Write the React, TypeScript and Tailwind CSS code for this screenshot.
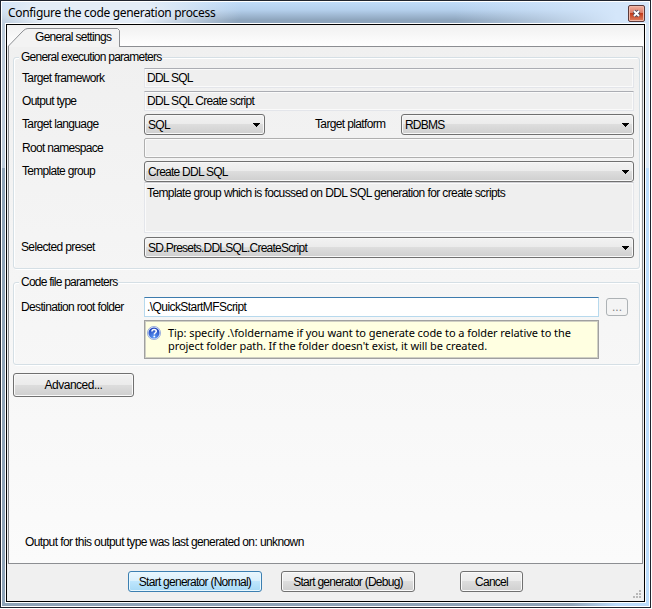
import type { ReactNode } from 'react';
import clsx from 'clsx';

interface FieldProps {
  children?: ReactNode;
  className?: string;
}

const etched = 'border border-[#d5dfe5] rounded-[3px] shadow-[inset_1px_1px_0_#fff,1px_1px_0_#fff]';

function Label({ children, className }: FieldProps) {
  return <div className={clsx('w-[122px] shrink-0', className)}>{children}</div>;
}

function ReadOnlyField({ children, className }: FieldProps) {
  return (
    <div
      className={clsx(
        'flex-1 border border-[#e3e5ea] bg-[#efefef] pl-[2px] shadow-[inset_0_0_0_1px_#fafafa]',
        className,
      )}
    >
      {children}
    </div>
  );
}

function Combo({ children, className }: FieldProps) {
  return (
    <div
      className={clsx(
        'flex h-[21px] items-center justify-between rounded-[3px] border border-[#707070] pl-[3px] pr-1',
        'bg-[linear-gradient(#f2f2f2,#ebebeb_48%,#dddddd_50%,#cfcfcf)] shadow-[inset_0_0_0_1px_#f8f8f8]',
        className,
      )}
    >
      <span className="mt-[2px] leading-[17px]">{children}</span>
      <svg width="7" height="4" viewBox="0 0 7 4" shapeRendering="crispEdges">
        <path d="M0 0H7V1H6V2H5V3H4V4H3V3H2V2H1V1H0Z" fill="#000" />
      </svg>
    </div>
  );
}

function Button({ children, className, primary }: FieldProps & { primary?: boolean }) {
  return (
    <button
      type="button"
      className={clsx(
        'flex items-center justify-center rounded-[3px] border',
        primary
          ? 'border-[#3c7fb1] bg-[linear-gradient(#eaf6fd,#d9f0fc_48%,#bee6fd_50%,#a7d9f5)] shadow-[inset_0_0_0_1px_#e8f8ff]'
          : 'border-[#707070] bg-[linear-gradient(#f2f2f2,#ebebeb_48%,#dddddd_50%,#cfcfcf)] shadow-[inset_0_0_0_1px_#fafafa]',
        className,
      )}
    >
      {children}
    </button>
  );
}

function HelpIcon() {
  return (
    <svg width="14" height="14" viewBox="0 0 14 14" className="mt-1 shrink-0">
      <defs>
        <radialGradient id="help" cx="0.5" cy="0.9" r="0.8">
          <stop offset="0" stopColor="#5f9cf8" />
          <stop offset="1" stopColor="#2348bf" />
        </radialGradient>
      </defs>
      <circle cx="7" cy="7" r="6.6" fill="#dfe6f7" stroke="#8fa4d8" strokeWidth="0.8" />
      <circle cx="7" cy="7" r="5.5" fill="url(#help)" />
      <path
        d="M4.9 5.6C4.9 4.2 5.8 3.4 7.1 3.4S9.3 4.2 9.3 5.3C9.3 6.7 7.3 6.8 7.3 8.4"
        fill="none"
        stroke="#fff"
        strokeWidth="1.5"
      />
      <circle cx="7.3" cy="10.4" r="0.95" fill="#fff" />
    </svg>
  );
}

function TitleBar() {
  return (
    <div className="flex h-[21px] justify-between pl-[3px] pr-px">
      <span className="font-['Noto_Sans',sans-serif] text-[12px] leading-[22px] tracking-[-0.32px]">
        Configure the code generation process
      </span>
      <div className="mt-[3px] flex h-[17px] w-[17px] items-center justify-center rounded-[2px] border border-[#5a3a3c] bg-[linear-gradient(#f0b0a0,#dc7b66_48%,#c23c1c_50%,#e08060)] shadow-[inset_0_0_0_1px_#f0b8a8]">
        <svg width="9" height="9" viewBox="0 0 9 9">
          <path d="M2 2L7 7M7 2L2 7" stroke="#4a4a5c" strokeWidth="3.6" />
          <path d="M2 2L7 7M7 2L2 7" stroke="#fff" strokeWidth="1.9" />
        </svg>
      </div>
    </div>
  );
}

function TabStrip() {
  return (
    <div className="flex h-[21px] items-end bg-[linear-gradient(#f0f0f0,#fff)] pl-px">
      <div className="relative z-10 -mb-px h-[19px] w-[112px]">
        <svg width="112" height="19" viewBox="0 0 112 19" className="absolute inset-0">
          <path
            d="M0.5 19V18L14 4C17 1 18 0.5 21 0.5H109.5L111.5 2.5V19"
            fill="#f3f3f3"
            stroke="#8c8e92"
          />
        </svg>
        <span className="absolute left-[27px] top-[2px] whitespace-nowrap leading-[15px] tracking-[-0.7px]">
          General settings
        </span>
      </div>
    </div>
  );
}

function ExecutionParameters() {
  return (
    <fieldset className={clsx('h-[218px]', etched)}>
      <legend className="ml-[5px] bg-[#f0f0f0] pl-[2px] pr-px leading-[13px] tracking-[-0.75px]">
        General execution parameters
      </legend>
      <div className="flex flex-col gap-[3px] pl-2 pr-[5px] pt-1 leading-[20px]">
        <div className="flex h-5">
          <Label>Target framework</Label>
          <ReadOnlyField className="border-t-[#abadb3] leading-[18px] tracking-[-0.75px]">DDL SQL</ReadOnlyField>
        </div>
        <div className="flex h-5">
          <Label className="tracking-[-0.7px]">Output type</Label>
          <ReadOnlyField className="border-t-[#abadb3] leading-[18px] tracking-[-0.7px]">
            DDL SQL Create script
          </ReadOnlyField>
        </div>
        <div className="flex h-[21px]">
          <Label>Target language</Label>
          <Combo className="w-[121px]">SQL</Combo>
          <span className="ml-[50px] w-[86px]">Target platform</span>
          <Combo className="flex-1 tracking-[-0.8px]">RDBMS</Combo>
        </div>
        <div className="flex h-5">
          <Label className="tracking-[-0.7px]">Root namespace</Label>
          <div className="flex-1 rounded-[2px] border border-[#afafaf] bg-[#efefef] shadow-[inset_0_0_0_1px_#fafafa]" />
        </div>
        <div className="flex h-[72px]">
          <Label className="tracking-[-0.7px]">Template group</Label>
          <div className="flex flex-1 flex-col">
            <Combo className="tracking-[-0.75px]">Create DDL SQL</Combo>
            <ReadOnlyField className="border-t-[#d0d0d4] leading-5 tracking-[-0.61px]">
              Template group which is focussed on DDL SQL generation for create scripts
            </ReadOnlyField>
          </div>
        </div>
        <div className="mt-px flex h-[21px]">
          <Label className="-ml-px mr-px">Selected preset</Label>
          <Combo className="flex-1 tracking-[-0.77px]">SD.Presets.DDLSQL.CreateScript</Combo>
        </div>
      </div>
    </fieldset>
  );
}

function CodeFileParameters() {
  return (
    <fieldset className={clsx('mt-[7px] h-[89px]', etched)}>
      <legend className="ml-[5px] bg-[#f4f4f4] pl-[2px] pr-px leading-[13px] tracking-[-0.75px]">
        Code file parameters
      </legend>
      <div className="flex pl-[7px] pt-2 leading-5">
        <Label className="mr-px">Destination root folder</Label>
        <div className="w-[455px]">
          <div className="h-5 border border-[#b7d9ed] border-t-[#3d7bad] bg-white pl-[2px] leading-[19px] tracking-[-0.57px]">
            .\QuickStartMFScript
          </div>
          <div className="mt-[3px] flex h-[39px] border border-[#a0a0a0] bg-[#ffffe1] pl-[2px] pt-px shadow-[inset_0_0_0_1px_#d0d0c4]">
            <HelpIcon />
            <p className="ml-[7px] mt-[4px] whitespace-nowrap font-['Noto_Sans',sans-serif] text-[11px] leading-[13px] tracking-[-0.07px]">
              Tip: specify .\foldername if you want to generate code to a folder relative to the
              <br />
              project folder path. If the folder doesn't exist, it will be created.
            </p>
          </div>
        </div>
        <div className="ml-[7px] mt-px flex h-[18px] w-[22px] items-center justify-center rounded-[3px] border border-[#adb2b5] bg-[#f4f4f4] tracking-normal text-[#838383]">
          ...
        </div>
      </div>
    </fieldset>
  );
}

function Grip() {
  return (
    <svg width="9" height="9" viewBox="0 0 9 9" fill="#b8b8b8" shapeRendering="crispEdges">
      <path d="M6 0h2v2h-2zM3 3h2v2h-2zM6 3h2v2h-2zM0 6h2v2h-2zM3 6h2v2h-2zM6 6h2v2h-2z" />
    </svg>
  );
}

// Glass frame: title glow and streaks over the side and bottom borders
const glass = [
  'bg-[radial-gradient(ellipse_150px_40px_at_90px_10px,#e4edf7_40%,#e4edf700),linear-gradient(90deg,transparent_70%,#d4e6fa_95%),linear-gradient(#c0dcf9,#b4cfec_8px,#8ea5bd_18px,#8ea5bd_22px,transparent_22px),linear-gradient(90deg,#bccbda_4px,transparent_4px,transparent_643px,#dbe8f6_643px),linear-gradient(90deg,#8fa4b8_50%,#8fa4b8_88%,#bcdcfb_95%)]',
  'bg-[size:100%_22px,100%_22px,100%_100%,100%_166px,100%_100%] bg-no-repeat',
];

function App() {
  return (
    <div className="h-[609px] w-[652px] overflow-hidden bg-white font-['Liberation_Sans',sans-serif] text-[12px] tracking-[-0.64px] text-black">
      <div className="h-[608px] w-[651px] border border-[#20242e]">
        <div className={clsx('h-full border border-white px-[3px]', glass)}>
          <TitleBar />
          <div className="flex h-[580px] w-[641px] flex-col border border-white">
            <div className="flex flex-1 flex-col border border-black bg-[#f0f0f0]">
              <TabStrip />
              <main className="mx-px h-[518px] border border-[#8c8e92] bg-[linear-gradient(#f0f0f0,#fbfbfb)] pl-1 pr-[2px] pt-1">
                <ExecutionParameters />
                <CodeFileParameters />
                <Button className="mt-2 h-6 w-[121px] tracking-[-0.5px]">Advanced...</Button>
                <p className="ml-3 mt-[135px] leading-5 tracking-[-0.6px]">
                  Output for this output type was last generated on: unknown
                </p>
              </main>
              <footer className="flex pl-[121px] pt-[7px] tracking-[-0.74px]">
                <Button primary className="h-[21px] w-[134px]">Start generator (Normal)</Button>
                <Button className="ml-[19px] h-[21px] w-[134px]">Start generator (Debug)</Button>
                <Button className="ml-[45px] h-[21px] w-[63px]">Cancel</Button>
                <div className="ml-[110px] mt-[19px]">
                  <Grip />
                </div>
              </footer>
            </div>
          </div>
        </div>
      </div>
    </div>
  );
}

export default App;
